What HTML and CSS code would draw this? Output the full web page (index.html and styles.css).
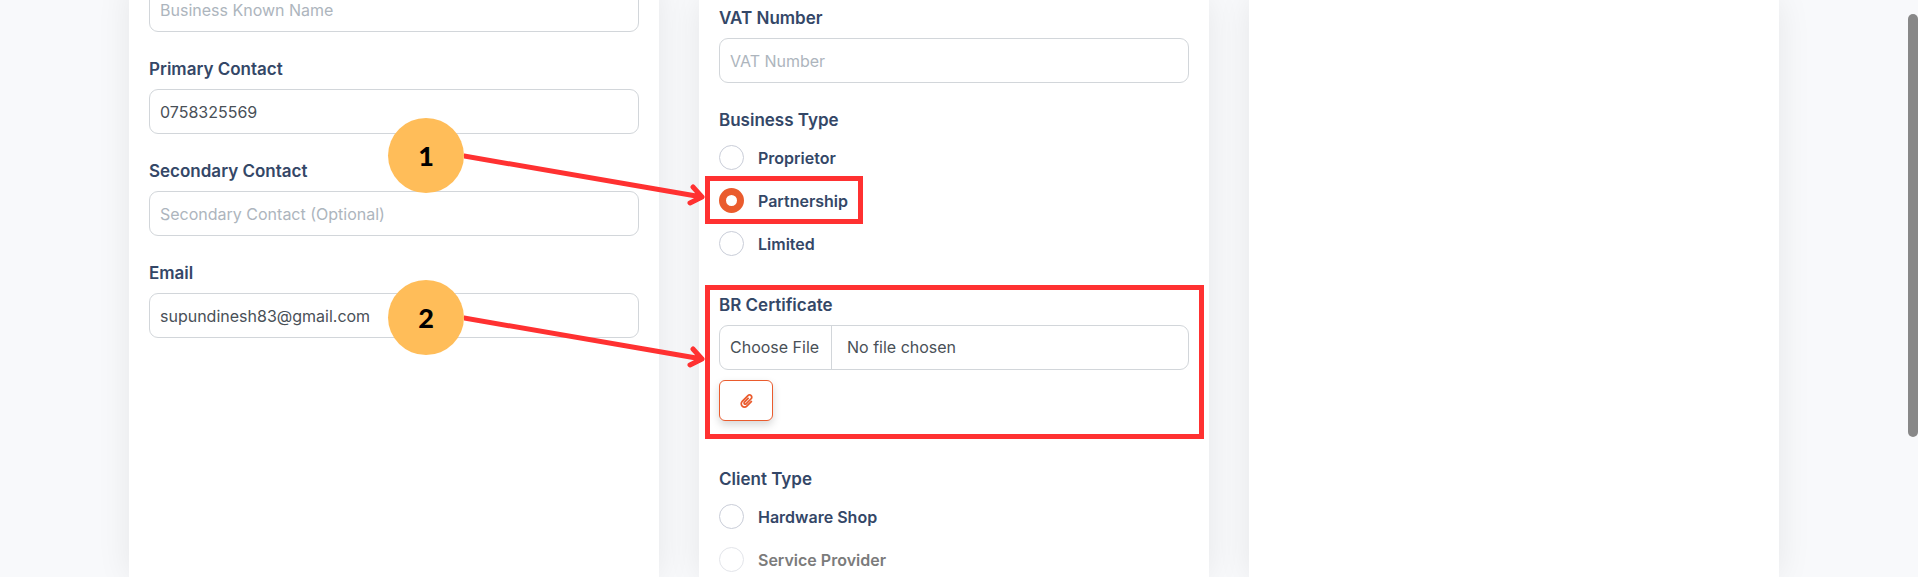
FILE: index.html
```html
<!DOCTYPE html>
<html lang="en">
<head>
  <meta charset="utf-8">
  <meta name="viewport" content="width=device-width, initial-scale=1">
  <title>Business details</title>
  <link rel="stylesheet" href="styles.css">
</head>
<body>
  <main class="page">
    <section class="card card-contact">
      <div class="field">
        <input class="input" type="text" placeholder="Business Known Name" aria-label="Business Known Name">
      </div>
      <div class="field">
        <label class="label" for="primary">Primary Contact</label>
        <input class="input" id="primary" type="tel" value="0758325569">
      </div>
      <div class="field">
        <label class="label" for="secondary">Secondary Contact</label>
        <input class="input" id="secondary" type="tel" placeholder="Secondary Contact (Optional)">
      </div>
      <div class="field">
        <label class="label" for="email">Email</label>
        <input class="input" id="email" type="email" value="supundinesh83@gmail.com">
      </div>
    </section>

    <section class="card card-business">
      <div class="field">
        <label class="label" for="vat">VAT Number</label>
        <input class="input" id="vat" type="text" placeholder="VAT Number">
      </div>
      <fieldset class="group">
        <legend class="label">Business Type</legend>
        <div class="options">
          <label class="option"><input class="radio" type="radio" name="business">Proprietor</label>
          <label class="option highlight highlight-option"><input class="radio" type="radio" name="business" checked>Partnership</label>
          <label class="option"><input class="radio" type="radio" name="business">Limited</label>
        </div>
      </fieldset>
      <div class="upload highlight highlight-upload">
        <label class="label" for="certificate">BR Certificate</label>
        <input class="input file" id="certificate" type="file">
        <button class="attach" type="button" aria-label="Attachment">
          <svg class="clip" viewBox="0 0 448 512" aria-hidden="true"><path d="M43.246 466.142c-58.43-60.289-57.341-157.511 1.386-217.581L254.392 34c44.316-45.332 116.351-45.336 160.671 0 43.89 44.894 43.943 117.329 0 162.276L232.214 383.128c-29.855 30.537-78.633 30.111-107.982-.998-28.275-29.97-27.368-77.473 1.452-106.953l143.743-146.835c6.182-6.314 16.312-6.422 22.626-.241l22.861 22.379c6.315 6.182 6.422 16.312.241 22.626L171.427 319.927c-4.932 5.045-5.236 13.428-.648 18.292 4.372 4.634 11.245 4.711 15.688.165l182.849-186.851c19.613-20.062 19.613-52.725-.011-72.798-19.189-19.627-49.957-19.637-69.154 0L90.39 293.295c-34.763 35.56-35.299 93.12-1.191 128.313 34.01 35.093 88.985 35.137 123.058.286l172.06-175.999c6.177-6.319 16.307-6.433 22.626-.256l22.877 22.364c6.319 6.177 6.434 16.307.256 22.626l-172.06 175.998c-59.576 60.938-155.943 60.216-214.77-.485z"/></svg>
        </button>
      </div>
      <fieldset class="group">
        <legend class="label">Client Type</legend>
        <div class="options">
          <label class="option"><input class="radio" type="radio" name="client">Hardware Shop</label>
          <label class="option option-disabled"><input class="radio" type="radio" name="client" disabled>Service Provider</label>
        </div>
      </fieldset>
    </section>

    <section class="card"></section>
  </main>

  <div class="step step-one">
    <span class="step-number">1</span>
    <svg class="arrow" viewBox="0 0 244 60" aria-hidden="true"><path d="M0 8L238 49M229 39L238 49L226 55"/></svg>
  </div>
  <div class="step step-two">
    <span class="step-number">2</span>
    <svg class="arrow" viewBox="0 0 244 60" aria-hidden="true"><path d="M0 8L238 49M229 39L238 49L226 55"/></svg>
  </div>
  <div class="scroll-thumb"></div>
</body>
</html>
```
FILE: styles.css
```css
* {
  box-sizing: border-box;
}

body {
  position: relative;
  min-height: 100vh;
  margin: 0;
  background: #f8f9fb;
  color: #344767;
  font-family: Inter, "Open Sans", sans-serif;
  font-size: 16px;
  line-height: 24px;
}

.page {
  display: grid;
  grid-template-columns: 530fr 510fr 530fr;
  gap: 40px;
  min-height: 100vh;
  padding: 0 139px 0 129px;
}

.card {
  padding: 0 20px;
  background: #fff;
  box-shadow: 0 0 32px rgba(0, 0, 0, 0.08);
}

.card-contact {
  margin-top: -13px;
}

.card-business {
  padding-top: 6px;
}

.field {
  margin-bottom: 25px;
}

.label {
  display: block;
  margin-bottom: 8px;
  padding: 0;
  font-size: 17px;
  font-weight: 600;
}

.input {
  display: block;
  width: 100%;
  height: 45px;
  padding: 0 10px;
  border: 1px solid #d2d6da;
  border-radius: 9px;
  background: #fff;
  color: #495057;
  font: inherit;
}

.input::placeholder {
  color: #adb5bd;
  opacity: 1;
}

.group {
  min-width: 0;
  margin: 0 0 37px;
  padding: 0;
  border: 0;
}

.group:last-child {
  margin-bottom: 0;
}

.options {
  display: flex;
  flex-direction: column;
  align-items: flex-start;
  gap: 18px;
  padding-top: 5px;
}

.option {
  display: flex;
  align-items: center;
  gap: 14px;
  height: 25px;
  font-size: 16px;
  font-weight: 600;
}

.option-disabled {
  color: #7b7b7b;
}

.radio {
  appearance: none;
  width: 25px;
  height: 25px;
  margin: 0;
  border: 1px solid #c9cdd8;
  border-radius: 50%;
  background: #fff;
}

.radio:checked {
  border: 7px solid #ea5b2d;
}

.radio:disabled {
  border-color: #e3e5ea;
}

.highlight {
  position: relative;
}

.highlight::after {
  content: "";
  position: absolute;
  border: 5px solid #ff3131;
  pointer-events: none;
}

.highlight-option::after {
  inset: -12px -15px -11px -14px;
}

.highlight-upload::after {
  inset: -8px -15px -18px -14px;
}

.upload {
  margin-bottom: 46px;
}

.file {
  padding: 0;
  line-height: 43px;
}

.file::file-selector-button {
  width: 112px;
  height: 43px;
  margin: 0 15px 0 0;
  padding: 0 0 0 10px;
  border: 0;
  border-right: 1px solid #d2d6da;
  background: transparent;
  color: #495057;
  font: inherit;
  text-align: left;
}

.attach {
  display: flex;
  align-items: center;
  justify-content: center;
  width: 54px;
  height: 41px;
  margin-top: 10px;
  padding: 0;
  border: 1px solid #ea5b2d;
  border-radius: 6px;
  background: #fff;
  box-shadow: 0 4px 8px rgba(0, 0, 0, 0.16);
}

.clip {
  width: 13px;
  height: 14px;
  fill: #ea5b2d;
}

.step {
  position: absolute;
  left: 388px;
  display: flex;
  align-items: flex-start;
}

.step-one {
  top: 118px;
}

.step-two {
  top: 280px;
}

.step-number {
  display: flex;
  align-items: center;
  justify-content: center;
  width: 76px;
  height: 75px;
  border-radius: 50%;
  background: #ffbd59;
  color: #000;
  font-family: Lato, "Open Sans", sans-serif;
  font-size: 27px;
  font-weight: 900;
}

.arrow {
  width: 244px;
  height: 60px;
  margin-top: 30px;
  fill: none;
  stroke: #ff3131;
  stroke-width: 5;
  stroke-linecap: round;
  stroke-linejoin: round;
}

.scroll-thumb {
  position: absolute;
  top: 14px;
  right: 0;
  width: 10px;
  height: 423px;
  border-radius: 5px;
  background: #888;
}
```
